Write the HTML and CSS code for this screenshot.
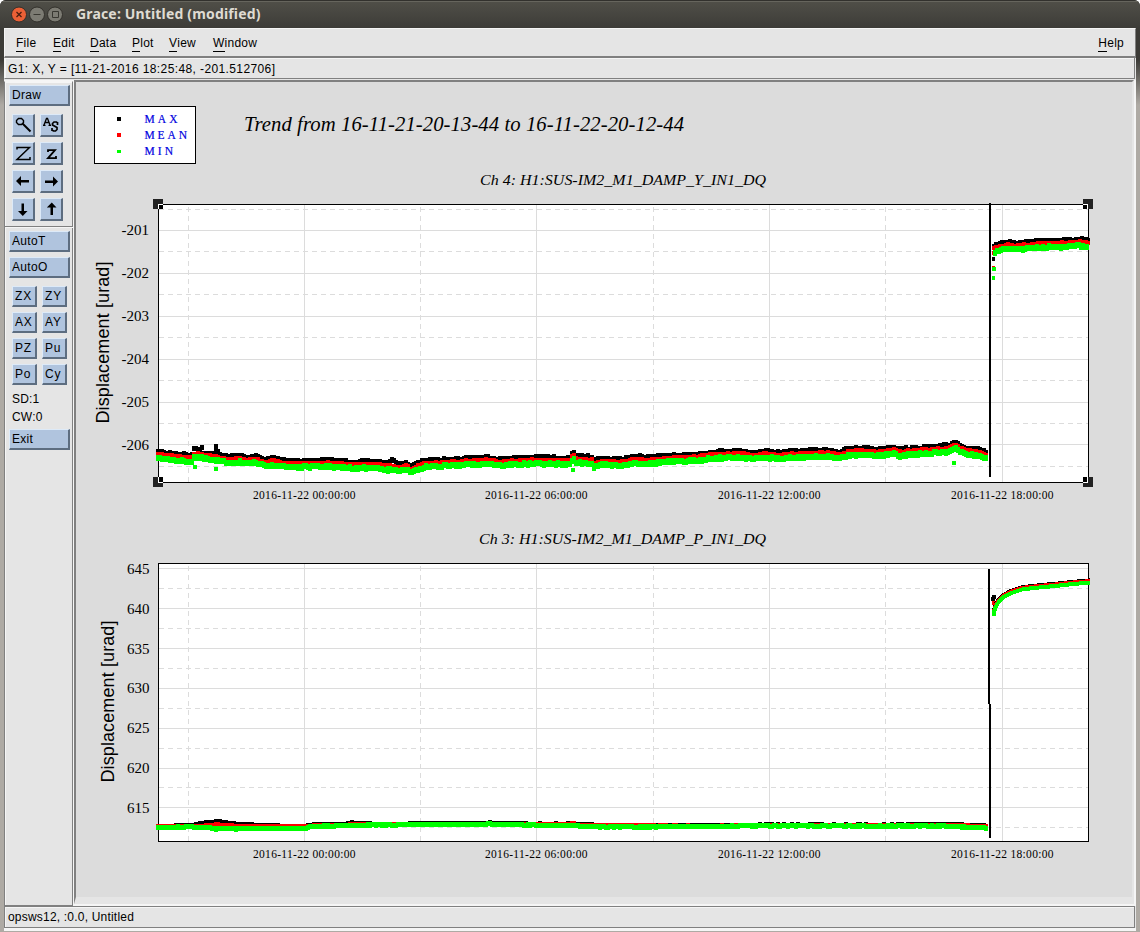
FILE: index.html
```html
<!DOCTYPE html>
<html lang="en">
<head>
<meta charset="utf-8">
<title>Grace: Untitled (modified)</title>
<link rel="stylesheet" href="styles.css">
</head>
<body>
<div class="window">
  <header class="titlebar">
    <svg class="controls" width="60" height="20" viewBox="0 0 60 20">
      <circle cx="15" cy="10.5" r="7.5" fill="#ec6036" stroke="#32302b"/>
      <path d="M12.500 8l5 5m0-5l-5 5" stroke="#4b1e10" stroke-width="1.3"/>
      <circle cx="33" cy="10.5" r="7.5" fill="#7c7b73" stroke="#32302b"/>
      <path d="M29.5 10.5h7" stroke="#393832"/>
      <circle cx="51" cy="10.5" r="7.5" fill="#7c7b73" stroke="#32302b"/>
      <path d="M48.5 7.5h6v6h-6z" fill="none" stroke="#393832"/>
    </svg>
    <h1 class="title">Grace: Untitled (modified)</h1>
  </header>
  <div class="client">
    <nav class="menubar">
      <span class="menu file"><u>F</u>ile</span><span class="menu edit"><u>E</u>dit</span><span class="menu data"><u>D</u>ata</span><span class="menu plot-menu"><u>P</u>lot</span><span class="menu view"><u>V</u>iew</span><span class="menu win"><u>W</u>indow</span><span class="menu help"><u>H</u>elp</span>
    </nav>
    <div class="locator">G1: X, Y = [11-21-2016 18:25:48, -201.512706]</div>
    <main class="main">
      <aside class="tools">
        <button class="btn">Draw</button>
        <div class="icons">
          <button class="btn"><svg width="21" height="21" viewBox="0 0 21 21" fill="none" stroke="#000"><path d="M5.500 3.500h3l2 2v2l-2 2h-3l-2-2v-2z" stroke-width="1.4"/><path d="M9.500 8.500l8 8" stroke-width="2"/></svg></button>
          <button class="btn"><svg width="21" height="21" viewBox="0 0 21 21" fill="none" stroke="#000" stroke-width="1.3"><path d="M3 10l2.500-6.500h1l2.500 6.500M4 7.500h4M2 10.300h2.500M7.500 10.300h2.500"/><path d="M16.500 10V7M16.500 8l-1-1h-2.500l-1.500 1.500v1.500l4.500 2.500v2l-1.500 1.500h-2l-1.500-1M11 16v-3" stroke-width="1.700"/></svg></button>
          <button class="btn"><svg width="21" height="21" viewBox="0 0 21 21" fill="none" stroke="#000" stroke-width="1.500"><path d="M4 6.500V4.500h12.500L4 16.500h13V14"/></svg></button>
          <button class="btn"><svg width="21" height="21" viewBox="0 0 21 21" fill="none" stroke="#000" stroke-width="1.800"><path d="M7 9V7.200h7L7 15.200h8V13"/></svg></button>
          <button class="btn"><svg width="21" height="21" viewBox="0 0 21 21"><path d="M3 10l5-5v4h8v2.500H8v3.500z"/></svg></button>
          <button class="btn"><svg width="21" height="21" viewBox="0 0 21 21"><path d="M17 10.500l-5-5v4H4v2.500h8v3.500z"/></svg></button>
          <button class="btn"><svg width="21" height="21" viewBox="0 0 21 21"><path d="M9.800 17l-4.800-5h3.500V4.500H11V12h3.500z"/></svg></button>
          <button class="btn"><svg width="21" height="21" viewBox="0 0 21 21"><path d="M10.800 3.500l-5 5h3.700v7.500H12V8.500h3.500z"/></svg></button>
        </div>
        <hr class="rule">
        <button class="btn">AutoT</button>
        <button class="btn auto">AutoO</button>
        <div class="pairs">
          <button class="btn">ZX</button><button class="btn">ZY</button>
          <button class="btn">AX</button><button class="btn">AY</button>
          <button class="btn">PZ</button><button class="btn">Pu</button>
          <button class="btn">Po</button><button class="btn">Cy</button>
        </div>
        <div class="stack">SD:1</div>
        <div class="stack">CW:0</div>
        <button class="btn exit">Exit</button>
      </aside>
      <section class="canvas">
        <svg id="chart" width="1056" height="815" viewBox="76 82 1056 815"></svg>
      </section>
    </main>
    <footer class="status">opsws12, :0.0, Untitled</footer>
  </div>
</div>
<script src="chart.js"></script>
</body>
</html>
```
FILE: styles.css
```css
* { box-sizing: border-box; }
body { margin: 0; background: #fff; font: 12px "Liberation Sans", Arial, sans-serif; color: #000; }
.window {
  width: 1140px; height: 932px; display: flex; flex-direction: column;
  border-radius: 6px 6px 0 0; overflow: hidden;
  background: linear-gradient(#3c3b37 0, #3c3b37 60px, #aeaaa4 105px, #aeaaa4 100%);
}
.titlebar {
  height: 28px; flex: none; display: flex; align-items: center; padding-left: 4px;
  border-top: 1px solid #32312d; box-shadow: inset 0 1px #66655d;
  background: linear-gradient(#504f48, #3d3c38);
}
.controls { flex: none; margin-top: -1px; }
.title { margin: 0 0 2px 12px; font: bold 14px "Noto Sans", "Open Sans", sans-serif; letter-spacing: .16px; color: #dfdbd2; white-space: nowrap; }
.client { margin: 0 4px; height: 904px; display: flex; flex-direction: column; background: #e5e5e5; border-bottom: 1px solid #aeaaa4; box-shadow: inset 0 -3px #f5f5f5; }
.menubar { height: 30px; flex: none; display: flex; padding: 8px 12px 0 12px; border: solid #f5f5f5; border-width: 1px 0 0 1px; border-right: 1px solid #808080; border-bottom: 2px solid #808080; }
.menu { letter-spacing: .25px; height: 15px; line-height: 13px; white-space: nowrap; }
.menu u { text-decoration: none; display: inline-block; height: 15px; border-bottom: 1px solid #000; }
.file { width: 37px; margin-left: -1px; }
.edit { width: 37px; }
.data { width: 42px; }
.plot-menu { width: 37px; }
.view { width: 44px; }
.help { margin-left: auto; margin-right: -1px; }
.locator, .status { flex: none; height: 22px; margin: 0 1px 0 0; padding-left: 3px; line-height: 20px; letter-spacing: .2px; border: 1px solid #808080; box-shadow: inset 1px 1px #f5f5f5; white-space: nowrap; }
.locator { height: 21px; border-top: 0; border-left-color: #f5f5f5; line-height: 22px; margin-bottom: 1px; letter-spacing: .39px; }
.main { height: 826px; flex: none; display: flex; background: #f5f5f5; }
.tools { width: 69px; margin: 1px 1px 0 0; border: 1px solid #808080; border-top-color: #f5f5f5; display: flex; flex-direction: column; padding: 3px 0 0 4px; box-shadow: inset 1px 1px #f5f5f5; background: #e5e5e5; }
.btn {
  flex: none; width: 61px; height: 21px; padding: 0 0 0 2px; text-align: left;
  font: inherit; letter-spacing: .3px; color: #000; background: #b0c4de; border: 1px solid #ddeaf8;
  border-right: 2px solid #5d6d80; border-bottom: 2px solid #5d6d80;
}
.icons { display: grid; grid-template-columns: 23px 23px; gap: 5px; padding: 8px 0 0 3px; }
.icons .btn { width: 23px; height: 23px; padding: 0; }
.icons svg { display: block; }
.rule { width: 68px; margin: 5px 0 3px -4px; border: 0; height: 2px; border-top: 1px solid #808080; background: #f5f5f5; flex: none; }
.auto { margin-top: 5px; }
.pairs { display: grid; grid-template-columns: 25px 25px; gap: 5px; padding: 8px 0 6px 3px; }
.pairs .btn { width: 25px; letter-spacing: .8px; }
.stack { height: 18px; line-height: 14px; padding: 1px 0 0 3px; letter-spacing: .2px; }
.exit { margin-top: 2px; }
.canvas { width: 1060px; height: 824px; border: 2px solid #808080; border-right: 2px solid #e5e5e5; border-bottom: 7px solid #e5e5e5; background: #dcdcdc; }
.canvas svg { display: block; }
.serif { font-family: "Liberation Serif", "Times New Roman", serif; }
.italic { font-style: italic; }
.axis-title { font-family: "Liberation Sans", Arial, sans-serif; font-size: 18px; }
.tick { font-size: 15px; }
.date { font-size: 11.5px; }
.legend { font-size: 11.5px; fill: #0000e0; stroke: #0000e0; stroke-width: .2px; }
```
FILE: chart.js
```js
const chart = document.getElementById('chart');
const out = [];
const rect = (x, y, w, h, fill, extra = '') =>
  out.push(`<rect x="${x}" y="${y}" width="${w}" height="${h}" fill="${fill}" ${extra}/>`);
const text = (x, y, cls, s, len, extra = '') =>
  out.push(`<text x="${x}" y="${y}" class="${cls}" ${len ? `textLength="${len}"` : ''} ${extra}>${s}</text>`);
const BLACK = '#000', RED = '#f00', GREEN = '#0f0';

// Linear interpolation over [x, y] control points.
function at(points, x) {
  for (let i = 1; i < points.length; i++) {
    const [x0, y0] = points[i - 1], [x1, y1] = points[i];
    if (x <= x1) return y0 + (y1 - y0) * (x - x0) / (x1 - x0);
  }
  return points[points.length - 1][1];
}
let seed = 7;
const noise = () => ((seed = (seed * 16807) % 2147483647) / 2147483647);

// A row of square markers hanging down from the curve.
function markers(points, offset, size, color, jitter, step = 2) {
  let d = '';
  const end = points[points.length - 1][0];
  for (let x = points[0][0]; x <= end; x += step) {
    const y = Math.round(at(points, x) + offset + (noise() - 0.5) * jitter);
    d += `M${Math.round(x) - 2} ${y}h4v${size}h-4z`;
  }
  out.push(`<path d="${d}" fill="${color}"/>`);
}

function frame(top, majors, minors) {
  rect(158, top, 931, 279, '#fff');
  const lines = (d, dash) => out.push(`<path d="${d}" stroke="#dcdcdc" fill="none" ${dash ? `stroke-dasharray="${dash}"` : ''}/>`);
  lines(majors.map(y => `M159 ${y + .5}H1088`).join('') + [304, 536, 769, 1002].map(x => `M${x + .5} ${top}v278`).join(''));
  lines(minors.map(y => `M159 ${y + .5}H1088`).join(''), '5 4');
  lines([188, 420, 653, 885].map(x => `M${x + .5} ${top + 278}v-278`).join(''), '5 4');
  out.push(`<rect x="158.5" y="${top + .5}" width="930" height="278" fill="none" stroke="#000"/>`);
  [['00', 253], ['06', 485], ['12', 718], ['18', 951]].forEach(([h, x]) =>
    text(x, top + 295, 'serif date', `2016-11-22 ${h}:00:00`, 102.5));
}

// Legend and headings
out.push('<rect x="94.500" y="106.500" width="101" height="57" fill="#fff" stroke="#000"/>');
rect(117, 117, 4, 4, BLACK); rect(117, 133, 4, 4, RED); rect(117, 150, 4, 3, GREEN);
text(144.5, 123, 'serif legend', 'MAX', 33);
text(144.5, 139, 'serif legend', 'MEAN', 42.5);
text(144.5, 155, 'serif legend', 'MIN', 28.5);
text(244, 131, 'serif italic', 'Trend from 16-11-21-20-13-44 to 16-11-22-20-12-44', 440, 'font-size="20.700"');
text(480, 185, 'serif italic', 'Ch 4: H1:SUS-IM2_M1_DAMP_Y_IN1_DQ', 286, 'font-size="15.500" lengthAdjust="spacingAndGlyphs"');
text(479, 544, 'serif italic', 'Ch 3: H1:SUS-IM2_M1_DAMP_P_IN1_DQ', 287, 'font-size="15.500" lengthAdjust="spacingAndGlyphs"');
text(0, 0, 'axis-title', 'Displacement [urad]', 162, 'transform="translate(109 423.500) rotate(-90)"');
text(0, 0, 'axis-title', 'Displacement [urad]', 162, 'transform="translate(114 782.500) rotate(-90)"');

// Upper graph
frame(204, [230, 273, 316, 359, 402, 444], [209, 251, 294, 337, 380, 423, 466]);
[-201, -202, -203, -204, -205, -206].forEach((v, i) => text(149, 235 + Math.round(i * 42.9), 'serif tick', v, 0, 'text-anchor="end"'));
const yaw = [[158,449.5],[192,452.7],[193.500,446],[202,446],[203,451],[214,451],[215,446],[217,446],[219,452],[227,454],[240,452.700],[247,455],[257,454],[265,457],[273,455.500],[283,457.500],[303,458.300],[330,457.500],[353,459.500],[377,459],[388,461],[392,457.500],[400,462],[407,460],[411,464.500],[417,461],[427,457.500],[440,457.500],[452,456],[457,456.700],[473,455],[490,454.700],[500,456.700],[512,455.500],[540,454.700],[570,455.500],[572,451],[574,450],[577,454],[592,454.500],[593.500,458.500],[600,456],[623,456.700],[635,454],[653,454.700],[670,452.700],[693,452],[707,450],[723,448.700],[745,448.700],[753,450],[767,448.500],[780,450],[793,448.700],[813,447.700],[830,447.700],[840,449.500],[847,446.700],[860,445.500],[880,446.700],[893,444.500],[900,446.700],[917,445],[937,444],[950,442.700],[953,440],[957,440],[960,443],[967,445.500],[980,446.700],[986,449.500]];
markers(yaw, 0, 5, BLACK, 1.800);
// Mean and minimum stay smoother than the maximum around its spikes.
const yawLow = yaw.filter(([x]) => x < 202 || x > 218).map(([x, y]) => [x, x > 192 && x < 203 ? y + 2 : x > 388 && x < 395 ? y + 3 : y]);
markers(yawLow, 3, 4, RED, 1.200);
markers(yawLow, 6, 6, GREEN, 1.800);
rect(391, 469, 4, 4, GREEN); rect(386, 470, 4, 4, GREEN); rect(409, 470, 4, 4, GREEN);
[[193,465],[214,467],[571,468],[952,461]].forEach(([x, y]) => rect(x, y, 4, 4, GREEN));
rect(214, 444, 4, 4, BLACK);
rect(989, 203, 2, 274, BLACK);
rect(992, 257, 3, 4, BLACK);
rect(992, 251, 3, 4, RED);
rect(992, 266, 3, 2, RED);
rect(992, 267, 4, 4, GREEN);
rect(992, 276, 3, 4, GREEN);
const yawStep = [[994,243],[1000,241],[1008,239.700],[1015,240.500],[1037,238.500],[1048,238],[1067,237.700],[1082,236.700],[1088,238]];
markers(yawStep, 0, 4, BLACK, 1.200);
markers(yawStep, 3, 4, RED, 1);
markers(yawStep.map(([x, y]) => [x + (x < 1000 ? 1 : 0), y]), 6, 6, GREEN, 1.600);

// Selection handles around the focused graph
[[153,199,158,204],[1083,199,1083,204],[153,477,158,477],[1083,477,1083,477]].forEach(([x, y, ix, iy]) => {
  rect(x, y, 10, 10, '#222');
  rect(ix, iy, 5, y > 300 ? 6 : 5, '#fff');
  rect(ix + (x < 500 ? 1 : 0), y > 300 ? 477 : iy + 1, 4, y > 300 ? 5 : 4, '#000');
});

// Lower graph
frame(563, [568, 608, 648, 688, 728, 768, 807], [588, 628, 668, 708, 748, 787, 827]);
[645, 640, 635, 630, 625, 620, 615].forEach((v, i) => text(149.5, 574 + Math.round(i * 39.8), 'serif tick', v, 0, 'text-anchor="end"'));
const pitchMax = [[158,824.500],[178,823.500],[194,823],[200,820.800],[214,820.500],[217,818.500],[228,821],[240,822],[275,823.500],[300,824.500],[312,822.500],[345,821.500],[352,820.500],[370,821.500],[388,822.500],[410,821.500],[490,820.700],[530,821.700],[573,821.500],[600,823],[700,823],[800,822.500],[880,822.700],[950,822],[970,823],[986,823.500]];
const pitchMean = [[158,824],[200,824],[216,822.500],[240,824],[305,824],[330,823],[380,822],[500,822],[560,822.500],[573,821],[577,823],[700,823.700],[850,823],[950,823],[986,824]];
const pitchMin = [[158,825],[190,824.500],[200,825],[216,826],[240,826],[305,826],[312,824],[345,823],[370,822.500],[450,822],[490,821.500],[530,822.500],[573,823],[600,824.500],[650,824.500],[750,823.500],[850,823.500],[950,823.500],[970,825],[986,825.500]];
markers(pitchMax, 0, 4, BLACK, .5);
markers(pitchMean, 0, 4, RED, .4);
markers(pitchMin, 0, 5, GREEN, .6);
rect(234, 827, 4, 5, GREEN); rect(214, 828, 4, 4, GREEN); rect(625, 825, 4, 4, GREEN);
rect(988, 569, 2, 135, BLACK);
rect(989, 704, 2, 134, BLACK);
rect(991, 597, 4, 4, BLACK); rect(992, 595, 4, 4, BLACK);
rect(992, 601, 3, 4, RED); rect(992, 608, 3, 3, RED);
const rise = [[994,613],[994.600,609],[996,605],[999,600.500],[1003,596.500],[1010,592.500],[1023,588.200],[1040,586.400],[1057,584.800],[1073,583],[1088,581.800]];
const risePath = (dy, w, color) => out.push(`<path d="M${rise.map(([x, y]) => `${x} ${y + dy}`).join('L')}" fill="none" stroke="${color}" stroke-width="${w}" stroke-linecap="square" shape-rendering="crispEdges"/>`);
risePath(-1.200, 4, BLACK);
risePath(-.5, 4, RED);
risePath(1, 4, GREEN);

chart.innerHTML = out.join('');
```
